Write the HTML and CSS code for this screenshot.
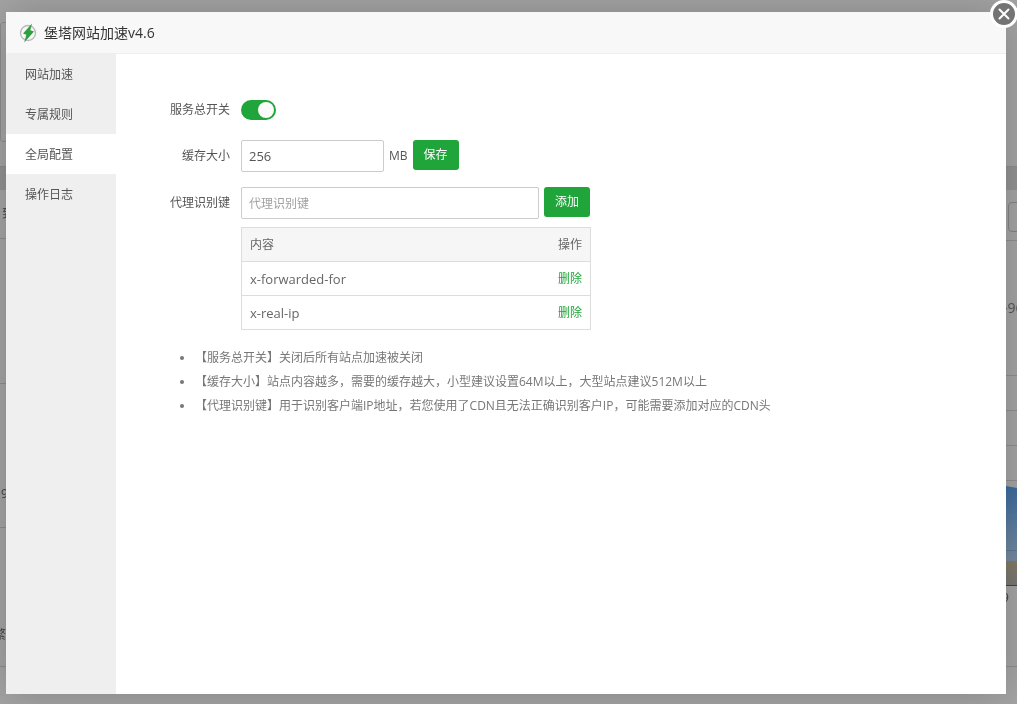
FILE: index.html
```html
<!DOCTYPE html>
<html lang="zh-CN">
<head>
<meta charset="utf-8">
<title>堡塔网站加速</title>
<link rel="stylesheet" href="styles.css">
</head>
<body>
<div class="page" aria-hidden="true">
  <svg class="edge edge-left" width="6" height="704">
    <rect class="band" y="166" width="6" height="24"/>
    <path class="rule" d="M6 22.5H3Q.5 22.5 .5 26V138Q.5 141.500 3 141.500H6M0 166.500H6M0 238.500H6M0 383.500H6M0 527.500H6M0 666.500H6"/>
    <text class="edge-text" x="2" y="218">到</text>
    <text class="edge-text" x="1" y="498">9</text>
    <text class="edge-text" x="-6" y="639">繁</text>
  </svg>
  <svg class="edge edge-right" width="11" height="704">
    <defs>
      <linearGradient id="area" x1="0" y1="0" x2="0" y2="1">
        <stop offset="0" stop-color="#3c6b9e"/>
        <stop offset="1" stop-color="#778b9f"/>
      </linearGradient>
      <linearGradient id="ground" x1="0" y1="0" x2="0" y2="1">
        <stop offset="0" stop-color="#857b66"/>
        <stop offset="1" stop-color="#777773"/>
      </linearGradient>
    </defs>
    <rect class="band" y="166" width="11" height="24"/>
    <path class="rule" d="M0 166.500H11M0 240.500H11M0 375.500H11M0 410.500H11M0 445.500H11M0 480.500H11M0 666.500H11"/>
    <path class="frame" d="M11 202.500H6Q2.500 202.500 2.500 206V228Q2.500 231.500 6 231.500H11"/>
    <path d="M0 486L11 488V561H0Z" fill="url(#area)"/>
    <rect y="561" width="11" height="24" fill="url(#ground)"/>
    <path class="grid" d="M0 515.500H11M0 550.500H11"/>
    <path class="axis" d="M0 585.500H11"/>
    <text class="edge-value" x="-3" y="313">-96</text>
    <text class="edge-text" x="-4" y="602">9</text>
  </svg>
</div>

<section class="dialog" role="dialog" aria-labelledby="dialog-title">
  <button class="close" type="button" aria-label="关闭">
    <svg width="28" height="28" viewBox="0 0 28 28">
      <circle cx="14" cy="14" r="12.500" fill="#747474" stroke="#fff" stroke-width="3"/>
      <path d="M9.500 9.500l9 9m0-9l-9 9" stroke="#fff" stroke-width="2" stroke-linecap="round"/>
    </svg>
  </button>
  <header class="header">
    <svg class="logo" width="18" height="20" viewBox="0 0 18 20">
      <circle cx="9" cy="10" r="7.500" fill="none" stroke="#b9bbba" stroke-width="1.400"/>
      <path d="M13 .5L4 10.500L7.300 11.800L5.200 19.500L15 8.500L11.300 7.300Z" fill="#2fa042"/>
    </svg>
    <h1 class="title" id="dialog-title">堡塔网站加速v4.6</h1>
  </header>
  <div class="body">
    <nav class="menu">
      <a class="menu-item" href="#">网站加速</a>
      <a class="menu-item" href="#">专属规则</a>
      <a class="menu-item active" href="#" aria-current="page">全局配置</a>
      <a class="menu-item" href="#">操作日志</a>
    </nav>
    <main class="content">
      <form class="form">
        <div class="row row-switch">
          <label class="label" for="service">服务总开关</label>
          <input class="switch" id="service" type="checkbox" role="switch" checked>
        </div>
        <div class="row">
          <label class="label" for="cache">缓存大小</label>
          <input class="field field-short" id="cache" type="text" value="256">
          <span class="unit">MB</span>
          <button class="btn" type="button">保存</button>
        </div>
        <div class="row">
          <label class="label" for="key">代理识别键</label>
          <input class="field field-long" id="key" type="text" placeholder="代理识别键">
          <button class="btn" type="button">添加</button>
        </div>
      </form>
      <table class="table">
        <thead>
          <tr><th>内容</th><th class="action">操作</th></tr>
        </thead>
        <tbody>
          <tr><td>x-forwarded-for</td><td class="action"><a class="link" href="#">删除</a></td></tr>
          <tr><td>x-real-ip</td><td class="action"><a class="link" href="#">删除</a></td></tr>
        </tbody>
      </table>
      <ul class="tips">
        <li>【服务总开关】关闭后所有站点加速被关闭</li>
        <li>【缓存大小】站点内容越多，需要的缓存越大，小型建议设置64M以上，大型站点建议512M以上</li>
        <li>【代理识别键】用于识别客户端IP地址，若您使用了CDN且无法正确识别客户IP，可能需要添加对应的CDN头</li>
      </ul>
    </main>
  </div>
</section>
</body>
</html>
```
FILE: styles.css
```css
* {
  box-sizing: border-box;
}

body {
  margin: 0;
  min-height: 100vh;
  display: flex;
  padding: 12px 11px 10px 6px;
  background: #a4a4a4;
  color: #555;
  font: 12px/20px "Open Sans", "Noto Sans CJK SC", sans-serif;
}

input,
button {
  font: inherit;
}

.page {
  position: fixed;
  inset: 0;
  display: flex;
  justify-content: space-between;
  overflow: hidden;
}

.edge {
  overflow: hidden;
}

.band {
  fill: #929292;
}

.rule,
.frame,
.grid,
.axis {
  fill: none;
  stroke: #8d8d8d;
}

.frame {
  stroke: #838383;
}

.grid {
  stroke: #5d7894;
}

.axis {
  stroke: #444;
}

.edge-text {
  fill: #444;
  font-size: 12px;
}

.edge-value {
  fill: #555;
  font-size: 14px;
}

.dialog {
  position: relative;
  flex: 1;
  display: flex;
  flex-direction: column;
  background: #fff;
  box-shadow: 0 0 40px rgba(0, 0, 0, 0.2);
}

.close {
  position: absolute;
  top: -12px;
  right: -12px;
  width: 28px;
  height: 28px;
  padding: 0;
  border: 0;
  background: none;
}

.close svg {
  display: block;
}

.header {
  display: flex;
  align-items: center;
  gap: 7px;
  height: 42px;
  padding-left: 13px;
  border-bottom: 1px solid #eee;
  background: #f8f8f8;
}

.title {
  margin: 0;
  color: #333;
  font-size: 14px;
  font-weight: 400;
}

.body {
  flex: 1;
  display: flex;
}

.menu {
  width: 110px;
  background: #efefef;
}

.menu-item {
  display: block;
  height: 40px;
  padding: 11px 0 0 19px;
  color: #555;
  text-decoration: none;
}

.active {
  background: #fff;
}

.content {
  flex: 1;
  padding: 40px 40px 20px 44px;
}

.form {
  display: flex;
  flex-direction: column;
  gap: 15px;
}

.row {
  display: flex;
  align-items: center;
  gap: 5px;
  height: 32px;
}

.row-switch {
  height: 31px;
}

.label {
  width: 70px;
  margin-right: 6px;
  text-align: right;
}

.switch {
  appearance: none;
  display: flex;
  justify-content: flex-end;
  width: 35px;
  height: 20px;
  margin: 0;
  padding: 2px;
  border-radius: 10px;
  background: #20a53a;
}

.switch::before {
  content: "";
  width: 16px;
  height: 16px;
  border-radius: 50%;
  background: #fafafa;
}

.field {
  height: 32px;
  padding: 0 7px;
  border: 1px solid #ccc;
  border-radius: 2px;
  background: #fff;
  color: #555;
}

.field::placeholder {
  color: #a0a0a0;
}

.field-short {
  width: 143px;
}

.field-long {
  width: 298px;
}

.btn {
  align-self: flex-start;
  width: 46px;
  height: 30px;
  padding: 0;
  border: 0;
  border-radius: 3px;
  background: #20a53a;
  color: #fff;
}

.table {
  width: 350px;
  margin: 8px 0 0 81px;
  border: 1px solid #ddd;
  border-collapse: collapse;
}

.table th,
.table td {
  height: 34px;
  padding: 0 8px;
  border-bottom: 1px solid #ddd;
  color: #666;
  font-weight: 400;
  text-align: left;
}

.table th {
  background: #f6f6f6;
}

.field-short,
.table td {
  font-size: 13px;
}

.table .action {
  font-size: 12px;
  text-align: right;
}

.link {
  color: #20a53a;
  text-decoration: none;
}

.tips {
  margin: 16px 0 0;
  padding-left: 35px;
  color: #777;
  line-height: 24px;
}
```
